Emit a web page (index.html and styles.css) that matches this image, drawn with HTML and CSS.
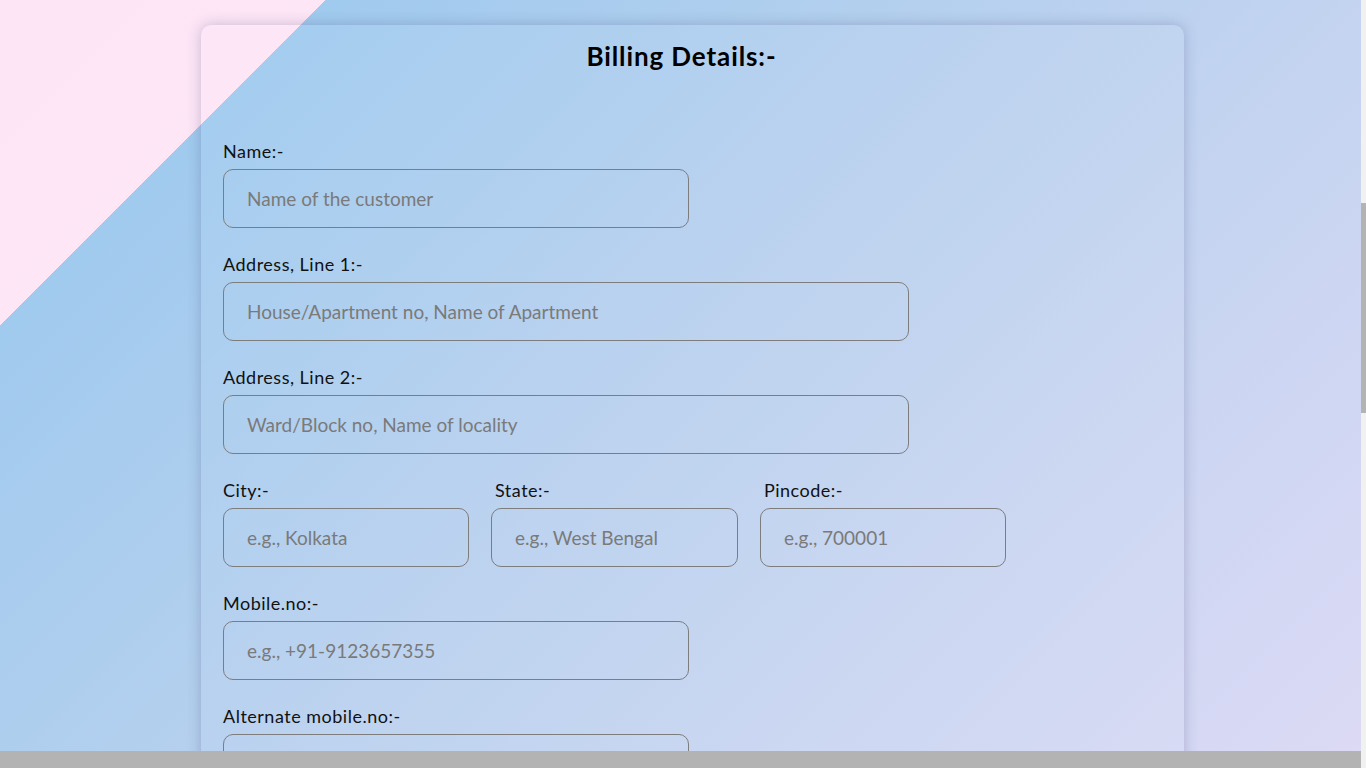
FILE: index.html
```html
<!DOCTYPE html>
<html lang="en">
<head>
<meta charset="utf-8">
<title>Billing Details</title>
<link rel="stylesheet" href="styles.css">
</head>
<body>
  <main class="viewport">
    <form class="card">
      <h2 class="title">Billing Details:-</h2>
      <div class="field">
        <label class="label">Name:-</label>
        <input class="input w-md" type="text" placeholder="Name of the customer">
      </div>
      <div class="field">
        <label class="label">Address, Line 1:-</label>
        <input class="input w-lg" type="text" placeholder="House/Apartment no, Name of Apartment">
      </div>
      <div class="field">
        <label class="label">Address, Line 2:-</label>
        <input class="input w-lg" type="text" placeholder="Ward/Block no, Name of locality">
      </div>
      <div class="row">
        <div class="field">
          <label class="label">City:-</label>
          <input class="input w-sm" type="text" placeholder="e.g., Kolkata">
        </div>
        <div class="field">
          <label class="label shift">State:-</label>
          <input class="input w-sm wide" type="text" placeholder="e.g., West Bengal">
        </div>
        <div class="field">
          <label class="label shift">Pincode:-</label>
          <input class="input w-sm" type="text" placeholder="e.g., 700001">
        </div>
      </div>
      <div class="field">
        <label class="label">Mobile.no:-</label>
        <input class="input w-md" type="text" placeholder="e.g., +91-9123657355">
      </div>
      <div class="field">
        <label class="label">Alternate mobile.no:-</label>
        <input class="input w-md" type="text">
      </div>
    </form>
  </main>
  <div class="vtrack"><div class="vthumb"></div></div>
  <div class="hbar"></div>
  <div class="corner"></div>
</body>
</html>
```

FILE: styles.css
```css
html, body {
  margin: 0;
  padding: 0;
  height: 100%;
  overflow: hidden;
}
body {
  display: grid;
  grid-template-columns: 1361px 5px;
  grid-template-rows: 751px 17px;
  font-family: "Lato", "Open Sans", sans-serif;
  color: #111;
}
.viewport {
  overflow: hidden;
  background: linear-gradient(135deg, #fde5f6 0%, #fde6f6 15.39%, #a0caee 15.39%, #b9d1ef 50%, #dcdaf5 100%);
}
.card {
  margin: 25px 0 0 201px;
  width: 983px;
  box-sizing: border-box;
  padding: 15px 22px 40px;
  border-radius: 10px;
  background: rgba(255, 255, 255, 0.06);
  box-shadow: 0 0 14px rgba(60, 70, 110, 0.28);
  display: flex;
  flex-direction: column;
  gap: 25px;
}
.title {
  margin: 0 0 43px;
  padding-right: 22px;
  text-align: center;
  font-size: 26px;
  line-height: 32px;
  font-weight: 700;
  letter-spacing: 0.9px;
  color: #000;
}
.field {
  display: flex;
  flex-direction: column;
  gap: 7px;
}
.label {
  font-size: 18px;
  line-height: 22px;
  letter-spacing: 0.5px;
  color: #111;
}
.label.shift {
  padding-left: 4px;
}
.row {
  display: flex;
  gap: 22px;
}
.input {
  box-sizing: border-box;
  height: 59px;
  border: 1px solid #7d7d7d;
  border-radius: 10px;
  background: transparent;
  padding: 0 23px;
  font-family: inherit;
  font-size: 19px;
  color: #333;
  outline: none;
}
.input::placeholder {
  color: #7a7a7a;
}
.w-sm { width: 246px; }
.w-sm.wide { width: 247px; }
.w-md { width: 466px; }
.w-lg { width: 686px; }
.vtrack {
  background: #f1f1f1;
  display: flex;
  flex-direction: column;
}
.vthumb {
  margin-top: 203px;
  height: 210px;
  background: #b3b3b3;
}
.hbar {
  background: #b3b3b3;
}
.corner {
  background: #f1f1f1;
}
```
